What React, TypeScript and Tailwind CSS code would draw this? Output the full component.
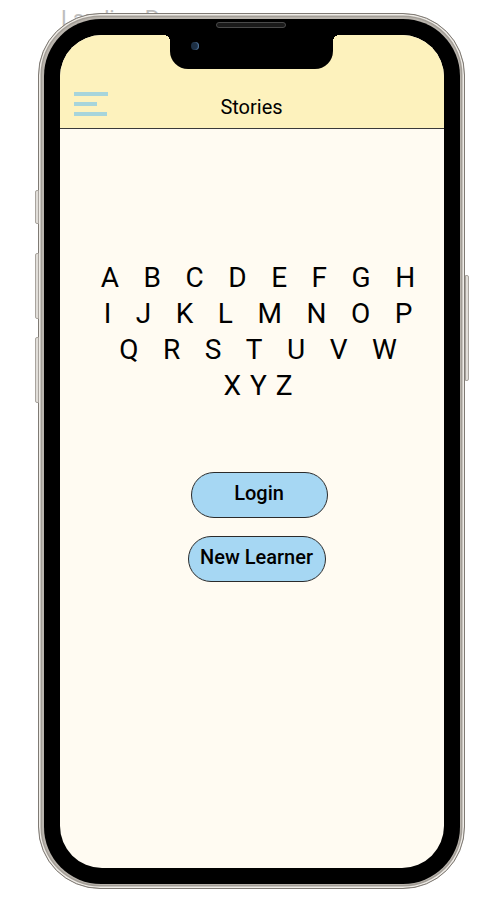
const rows = [
  ["A", "B", "C", "D", "E", "F", "G", "H"],
  ["I", "J", "K", "L", "M", "N", "O", "P"],
  ["Q", "R", "S", "T", "U", "V", "W"],
];

function Letters() {
  return (
    <div className="flex flex-col pl-[13px] font-['Roboto',sans-serif] text-[28px] leading-[36px] text-black">
      {rows.map((row, i) => (
        <div key={i} className="flex justify-center gap-[24.5px]">
          {row.map((l) => (
            <span key={l}>{l}</span>
          ))}
        </div>
      ))}
      <div className="flex justify-center gap-[9px]">
        <span>X</span>
        <span>Y</span>
        <span>Z</span>
      </div>
    </div>
  );
}

function App() {
  return (
    <div className="relative h-[904px] w-[490px] overflow-hidden bg-white font-['Roboto',sans-serif]">
      <p className="absolute left-[61px] top-[5px] text-[22px] leading-[28px] text-[#bdbdbd]">Landing Page</p>

      {/* phone */}
      <div className="relative z-10 ml-[38px] mt-[13px] h-[876px] w-[427px] rounded-[62px] border-[1.5px] border-[#7f7a74] bg-[#b9b4ad] p-[4.5px] shadow-[inset_0_0_0_1.5px_#efece7,inset_0_0_0_3px_#a39e97]">
        <span className="absolute left-[-4px] top-[176px] h-[34px] w-[4px] rounded-l-[2px] border border-[#a9a49e] bg-[#e1ded9]" />
        <span className="absolute left-[-4px] top-[239px] h-[66px] w-[4px] rounded-l-[2px] border border-[#a9a49e] bg-[#e1ded9]" />
        <span className="absolute left-[-4px] top-[323px] h-[66px] w-[4px] rounded-l-[2px] border border-[#a9a49e] bg-[#e1ded9]" />
        <span className="absolute right-[-5px] top-[261px] h-[106px] w-[4px] rounded-r-[2px] border border-[#a9a49e] bg-[#e1ded9]" />

        <div className="h-full rounded-[57px] bg-black p-[16px]">
          <div className="relative flex h-full flex-col overflow-hidden rounded-[42px] bg-[#fffbf2]">
            {/* notch */}
            <div className="absolute left-[110px] top-0 h-[34px] w-[163px] rounded-b-[18px] bg-black">
              <span className="absolute left-[21px] top-[7px] h-[8px] w-[8px] rounded-full bg-[#1d3045] shadow-[inset_-1px_0_1px_#5a7fa6]" />
            </div>
            <span className="absolute left-[104px] top-0 h-[6px] w-[6px] bg-[radial-gradient(circle_at_0_100%,transparent_6px,black_6px)]" />
            <span className="absolute left-[273px] top-0 h-[6px] w-[6px] bg-[radial-gradient(circle_at_100%_100%,transparent_6px,black_6px)]" />

            <header className="flex h-[94px] items-start justify-between border-b border-[#3a3a3a] bg-[#fdf2bd] px-[14px] pt-[57px]">
              <div className="flex w-[34px] flex-col gap-[6px]">
                <span className="h-[4px] w-[34px] bg-[#a7d5db]" />
                <span className="h-[4px] w-[23px] bg-[#a7d5db]" />
                <span className="h-[4px] w-[33px] bg-[#a7d5db]" />
              </div>
              <h1 className="mt-[3px] text-[20px] leading-[24px] text-black">Stories</h1>
              <div className="w-[34px]" />
            </header>

            <main className="flex flex-col pt-[131px]">
              <Letters />
              <div className="mt-[68px] flex flex-col items-center gap-[18px]">
                <button className="ml-[15px] h-[46px] w-[137px] rounded-full border border-[#2b2b2b] bg-[#a6d7f3] pb-[4px] text-[20px] font-medium text-black">
                  Login
                </button>
                <button className="ml-[10px] h-[46px] w-[138px] rounded-full border border-[#2b2b2b] bg-[#a6d7f3] pb-[4px] text-[20px] font-medium text-black">
                  New Learner
                </button>
              </div>
            </main>
          </div>
        </div>

        {/* speaker */}
        <span className="absolute left-[177px] top-[8px] h-[6px] w-[70px] rounded-full border border-[#4a4a4a] bg-[#1a1a1a]" />
      </div>
    </div>
  );
}

export default App;
